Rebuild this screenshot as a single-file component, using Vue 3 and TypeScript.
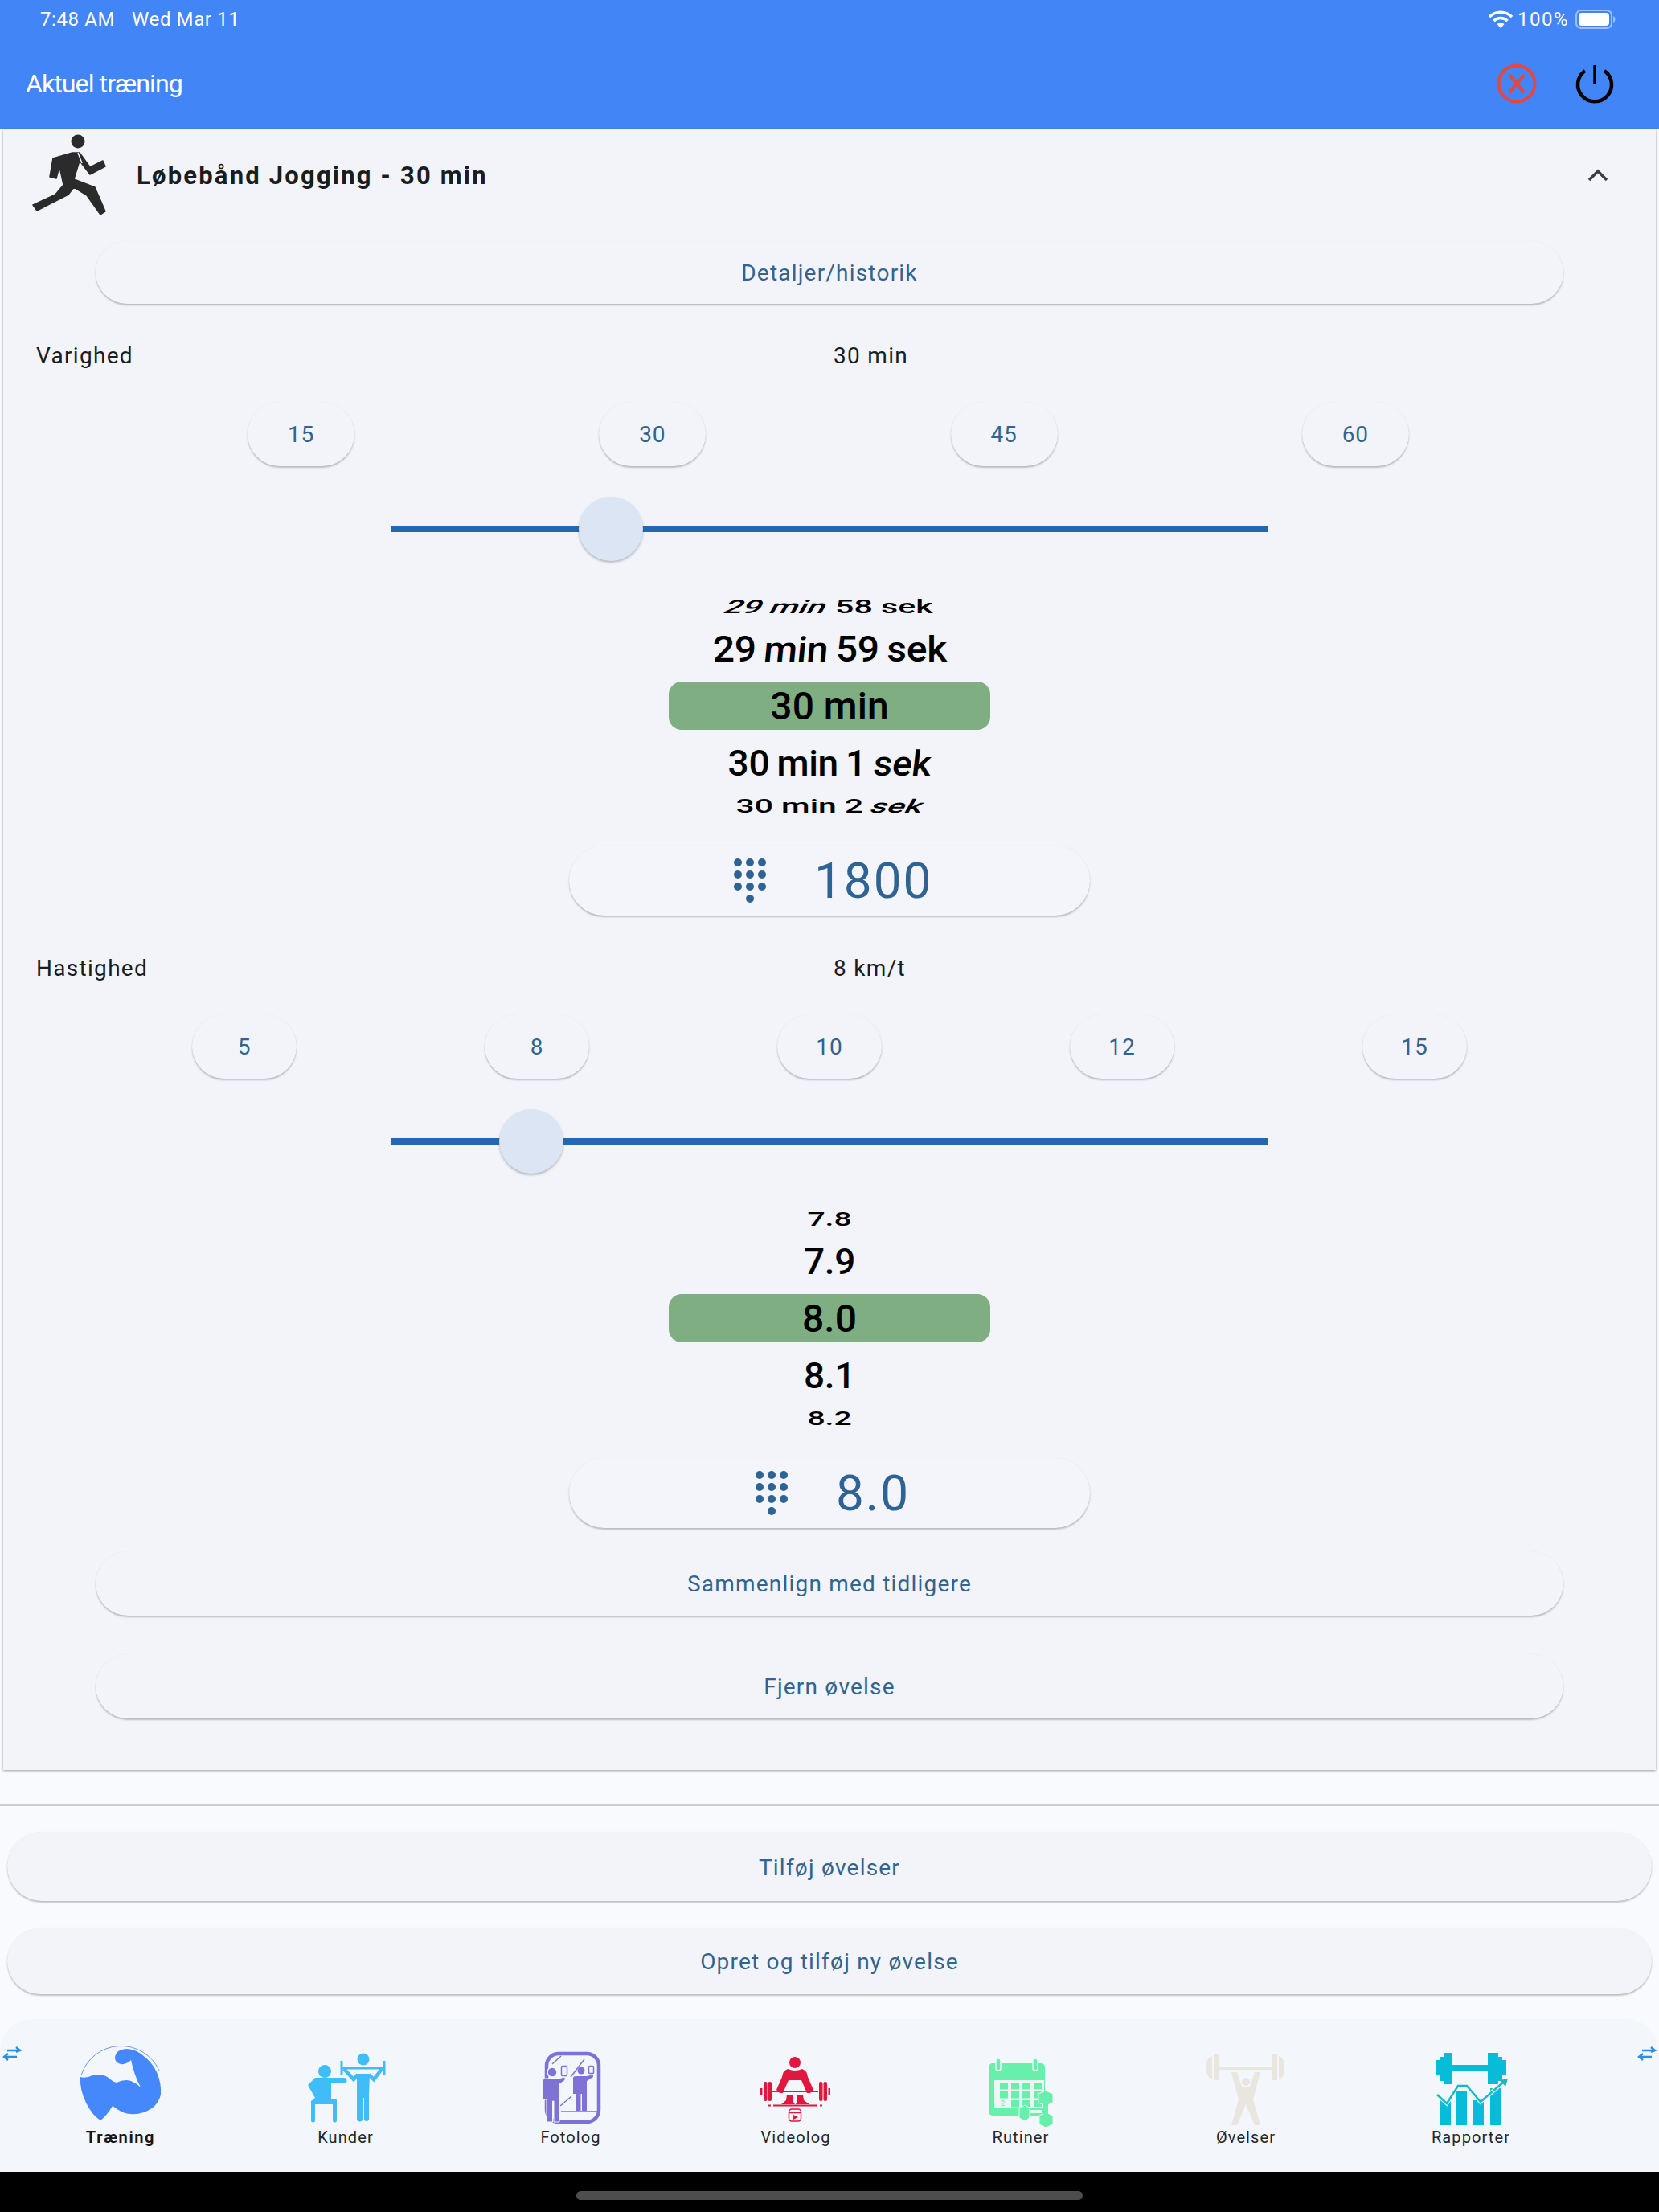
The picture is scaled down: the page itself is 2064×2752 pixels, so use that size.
<script setup lang="ts">
interface Seg { t: string; skew?: number }
interface WheelRow { kind: 'far' | 'near' | 'sel'; segs: Seg[]; sx: number; sy: number }
interface Field {
  label: string
  value: string
  chips: string[]
  chipClass: string
  thumb: number
  wheel: WheelRow[]
  dial: string
  dialClass: string
}

const fields: Field[] = [
  {
    label: 'Varighed', value: '30 min', chips: ['15', '30', '45', '60'], chipClass: 'chips-four', thumb: 25.1,
    wheel: [
      { kind: 'far', sx: 1.21, sy: 0.68, segs: [{ t: '29 min', skew: -18 }, { t: ' 58 sek' }] },
      { kind: 'near', sx: 1.045, sy: 0.95, segs: [{ t: '29 ' }, { t: 'min', skew: -5 }, { t: ' 59 sek' }] },
      { kind: 'sel', sx: 1, sy: 1, segs: [{ t: '30 min' }] },
      { kind: 'near', sx: 1, sy: 0.95, segs: [{ t: '30 min 1 ' }, { t: 'sek', skew: -6 }] },
      { kind: 'far', sx: 1.2, sy: 0.68, segs: [{ t: '30 min 2 ' }, { t: 'sek', skew: -18 }] }
    ],
    dial: '1800', dialClass: 'dial-wide'
  },
  {
    label: 'Hastighed', value: '8 km/t', chips: ['5', '8', '10', '12', '15'], chipClass: 'chips-five', thumb: 16,
    wheel: [
      { kind: 'far', sx: 1.15, sy: 0.68, segs: [{ t: '7.8' }] },
      { kind: 'near', sx: 1, sy: 0.95, segs: [{ t: '7.9' }] },
      { kind: 'sel', sx: 1, sy: 1, segs: [{ t: '8.0' }] },
      { kind: 'near', sx: 1, sy: 0.95, segs: [{ t: '8.1' }] },
      { kind: 'far', sx: 1.15, sy: 0.68, segs: [{ t: '8.2' }] }
    ],
    dial: '8.0', dialClass: 'dial-narrow'
  }
]

const dots = [
  [0, 0], [15, 0], [30, 0],
  [0, 15], [15, 15], [30, 15],
  [0, 30], [15, 30], [30, 30],
  [15, 45]
]

const cells: number[][] = []
for (const y of [39, 50, 61]) {
  for (const x of [20, 34, 48, 62]) {
    if (!(y === 61 && x === 20)) cells.push([x, y])
  }
}
</script>

<template>
  <div class="screen">
    <header class="appbar">
      <div class="status">
        <span class="status-left"><span>7:48 AM</span><span>Wed Mar 11</span></span>
        <span class="status-right">
          <svg class="wifi" viewBox="0 0 30 24" width="30" height="24">
            <path d="M1 9 A20 20 0 0 1 29 9" fill="none" stroke="#fff" stroke-width="3.4" />
            <path d="M6.5 14 A12 12 0 0 1 23.500 14" fill="none" stroke="#fff" stroke-width="3.4" />
            <path d="M15 23 L10.500 18 A6.500 6.500 0 0 1 19.500 18 Z" fill="#fff" />
          </svg>
          <span class="pct">100%</span>
          <svg class="battery" viewBox="0 0 50 24" width="50" height="24">
            <rect x="1" y="1" width="44" height="22" rx="6" fill="none" stroke="#9cc0fb" stroke-width="2" />
            <rect x="4" y="4" width="38" height="16" rx="4" fill="#fff" />
            <path d="M47 8 Q49.500 9 49.500 12 Q49.500 15 47 16 Z" fill="#9cc0fb" />
          </svg>
        </span>
      </div>
      <div class="toolbar">
        <span class="title">Aktuel træning</span>
        <span class="actions">
          <svg viewBox="0 0 52 52" width="52" height="52">
            <circle cx="26" cy="26" r="22.500" fill="none" stroke="#e8453c" stroke-width="4" />
            <path d="M17 15 L35 37 M35 15 L17 37" stroke="#e8453c" stroke-width="4" fill="none" />
          </svg>
          <svg viewBox="0 0 52 52" width="52" height="52">
            <path d="M14 10 A21 21 0 1 0 38 10" fill="none" stroke="#000" stroke-width="4.500" />
            <path d="M26 3 V26" stroke="#000" stroke-width="3.500" />
          </svg>
        </span>
      </div>
    </header>

    <section class="card">
      <div class="card-head">
        <svg class="runner" viewBox="38 165 96 106" width="96" height="106">
          <circle cx="97" cy="176" r="8.500" fill="#2b2b2b" />
          <path
            d="M90 190 L66 197 L62 220 L70 222 L74 207 L79 230 L69 242 L41 255 L46 262 L85 242 L92 233 L108 243 L125 267 L131 263 L118 233 L92 223 L99 200 L112 217 L131 207 L128 200 L112 208 L99 190 Z"
            fill="#2b2b2b" stroke="#2b2b2b" stroke-width="1.500" stroke-linejoin="round"
          />
          <path d="M97 190 L102 203" stroke="#f2f4fa" stroke-width="1.500" />
        </svg>
        <span class="card-title">Løbebånd Jogging - 30 min</span>
        <svg class="chevron" viewBox="0 0 28 18" width="28" height="18">
          <path d="M3 15 L14 4 L25 15" fill="none" stroke="#3a3d42" stroke-width="3.500" />
        </svg>
      </div>

      <button class="btn btn-inner btn-first">Detaljer/historik</button>

      <div v-for="(f, fi) in fields" :key="f.label" class="field" :class="{ 'field-second': fi === 1 }">
        <div class="field-head">
          <span class="field-label">{{ f.label }}</span>
          <span class="field-value">{{ f.value }}</span>
        </div>

        <div class="chips" :class="f.chipClass">
          <button v-for="c in f.chips" :key="c" class="chip">{{ c }}</button>
        </div>

        <div class="slider">
          <div class="track"></div>
          <div class="thumb" :style="{ left: f.thumb + '%' }"></div>
        </div>

        <div class="wheel">
          <div v-for="(r, ri) in f.wheel" :key="ri" class="wheel-row" :class="'wheel-' + r.kind">
            <span class="wheel-text" :style="{ transform: `scale(${r.sx}, ${r.sy})` }">
              <span
                v-for="(s, si) in r.segs"
                :key="si"
                class="seg"
                :style="s.skew ? { transform: `skewX(${s.skew}deg)` } : undefined"
              >{{ s.t }}</span>
            </span>
          </div>
        </div>

        <div class="dial" :class="f.dialClass">
          <svg viewBox="0 0 40 56" width="40" height="56">
            <circle v-for="(d, di) in dots" :key="di" :cx="d[0] + 5" :cy="d[1] + 5" r="5" fill="#2f6393" />
          </svg>
          <span class="dial-value">{{ f.dial }}</span>
        </div>
      </div>

      <button class="btn btn-inner btn-compare">Sammenlign med tidligere</button>
      <button class="btn btn-inner btn-remove">Fjern øvelse</button>
    </section>

    <div class="divider"></div>

    <button class="btn btn-page btn-add">Tilføj øvelser</button>
    <button class="btn btn-page btn-new">Opret og tilføj ny øvelse</button>

    <nav class="nav">
      <svg class="swap swap-left" viewBox="0 0 24 20" width="24" height="20">
        <path d="M6 6 H21 M17 2 L22 6 L17 8 M18 14 H3 M7 10 L2 14 L7 18" fill="none" stroke="#2a8fe0" stroke-width="2.400" />
      </svg>
      <svg class="swap swap-right" viewBox="0 0 24 20" width="24" height="20">
        <path d="M6 6 H21 M17 2 L22 6 L17 8 M18 14 H3 M7 10 L2 14 L7 18" fill="none" stroke="#2a8fe0" stroke-width="2.400" />
      </svg>

      <div class="nav-item nav-active">
        <svg viewBox="-5 -2 120 108" width="120" height="108">
          <path d="M6 42 A52 52 0 0 1 103 36" fill="none" stroke="#4285f4" stroke-width="0.800" />
          <path d="M5 44 Q12 46 20 42 Q32 39 40 45 Q45 50 50 51 Q60 46 68 49 Q75 52 80 57 Q72 42 68 23 Q62 29 55 28 Q48 26 48 20 Q49 10 62 9 Q72 9 80 15 Q95 26 100 38 Q106 52 105 66 Q101 82 84 88 Q68 93 56 87 Q50 84 45 80 Q38 92 30 98 Q20 92 12 76 Q4 60 5 44 Z" fill="#4488fb" />
        </svg>
        <span>Træning</span>
      </div>

      <div class="nav-item">
        <svg viewBox="370 2538 120 108" width="120" height="108" fill="#40bcf9">
          <circle cx="404" cy="2577" r="8" />
          <circle cx="452" cy="2562" r="7.500" />
          <path d="M392 2585 H428 A3.500 3.500 0 0 1 428 2592 H412 V2611 H417 A2 2 0 0 1 419 2613 V2638 A2.500 2.500 0 0 1 414 2638 V2618 H392 V2638 A2.500 2.500 0 0 1 387 2638 V2614 L392 2610 L383 2594 Z" />
          <path d="M424 2573 H479" stroke="#40bcf9" stroke-width="3" />
          <path d="M425 2564 V2582 M478 2564 V2582" stroke="#40bcf9" stroke-width="3" />
          <path d="M428 2574 L440 2587 L445 2581 M475 2574 L465 2587 L459 2581" fill="none" stroke="#40bcf9" stroke-width="4.500" />
          <path d="M444 2580 H460 L459 2608 V2636 A3 3 0 0 1 453 2636 V2610 H451 V2636 A3 3 0 0 1 444 2636 Z" />
        </svg>
        <span>Kunder</span>
      </div>

      <div class="nav-item">
        <svg viewBox="-15 -10 120 108" width="120" height="108" fill="#7f72d6">
          <rect x="15" y="7" width="65" height="85" rx="15" fill="none" stroke="#7f72d6" stroke-width="4.500" />
          <path d="M45 36 L62 14 M32 72 L46 60 M22 20 L33 10 M33 79 H78" stroke="#7f72d6" stroke-width="1.500" fill="none" />
          <circle cx="22" cy="30" r="6" stroke="#f3f6fa" stroke-width="1.500" />
          <path d="M10 41 Q10 38 14 38 H29 L38 36 V40 L31 45 V92 H24 V66 H22.500 V92 H15 V64 H10 Z" stroke="#f3f6fa" stroke-width="1" />
          <rect x="33.500" y="22.500" width="7" height="12" rx="1" fill="none" stroke="#7f72d6" stroke-width="1.500" />
          <circle cx="58" cy="28" r="4.500" />
          <path d="M48 38 Q48 35 51 35 H65 L73 33 V36 L65 41 V78 H59 V57 H57.500 V78 H52 V57 H48 Z" />
          <rect x="67.500" y="22.500" width="6" height="9" rx="1" fill="none" stroke="#7f72d6" stroke-width="1.500" />
        </svg>
        <span>Fotolog</span>
      </div>

      <div class="nav-item">
        <svg viewBox="-12 -14 120 108" width="120" height="108" fill="#e0173f">
          <circle cx="47" cy="14" r="7" />
          <path d="M38 22 Q47 26 56 22 Q62 24 63 32 L70 48 L66 52 H62 L55 36 H39 L32 52 H28 L24 48 L31 32 Q32 24 38 22 Z" />
          <path d="M37 54 H44 V62 L47 66 H30 L36 61 Z M50 54 H57 L58 61 L65 66 H48 L50 62 Z" />
          <path d="M19 50 H76" stroke="#e0173f" stroke-width="2" />
          <rect x="4" y="46" width="2.500" height="8" />
          <rect x="8" y="38" width="4.500" height="24" rx="2" />
          <rect x="13.500" y="38" width="4.500" height="24" rx="2" />
          <rect x="77" y="38" width="4.500" height="24" rx="2" />
          <rect x="82.500" y="38" width="4.500" height="24" rx="2" />
          <rect x="88.500" y="46" width="2.500" height="8" />
          <path d="M20 67.500 H75" stroke="#e0173f" stroke-width="1.800" />
          <path d="M14 67.500 H17 M78 67.500 H81" stroke="#e0173f" stroke-width="1.800" />
          <rect x="39.500" y="72" width="15" height="15" rx="3.500" fill="none" stroke="#e0173f" stroke-width="1.500" />
          <path d="M40 76.500 H54" stroke="#e0173f" stroke-width="1.500" />
          <path d="M45 79 L51 82 L45 85 Z" />
        </svg>
        <span>Videolog</span>
      </div>

      <div class="nav-item">
        <svg viewBox="-14 -14 120 108" width="120" height="108" fill="#66f0ac">
          <rect x="6" y="15" width="70" height="65" rx="5" />
          <rect x="13" y="36" width="62" height="34" fill="#e8f8f2" />
          <rect v-for="(c, i) in cells" :key="i" :x="c[0]" :y="c[1]" width="10" height="8.500" />
          <text x="21" y="68" font-size="9" fill="#8fcfb8" font-family="Roboto, sans-serif">2</text>
          <rect x="15" y="9" width="6" height="15" rx="3" fill="#66f0ac" stroke="#eef6f5" stroke-width="1.500" />
          <rect x="61" y="9" width="6" height="15" rx="3" fill="#66f0ac" stroke="#eef6f5" stroke-width="1.500" />
          <path d="M50 73 H72" stroke="#e8f8f2" stroke-width="8" />
          <path d="M52 72 H72" stroke="#66f0ac" stroke-width="2" />
          <path d="M44 70 L52 67 L57 71 V82 L52 87 L44 83 Z" stroke="#eef6f5" stroke-width="1" />
          <path d="M68 53 L77 49 L86 53 V64 L77 68 L68 64 Z" stroke="#eef6f5" stroke-width="1" />
          <path d="M69 80 L77 76 L86 80 V91 L77 95 L69 91 Z" stroke="#eef6f5" stroke-width="1" />
          <rect x="74" y="64" width="6" height="14" />
        </svg>
        <span>Rutiner</span>
      </div>

      <div class="nav-item">
        <svg viewBox="1490 2538 120 108" width="120" height="108" fill="#e9e6e0">
          <path d="M1517 2573 H1584" stroke="#e9e6e0" stroke-width="4" />
          <path d="M1508 2558 V2587 Q1501 2585 1501 2572 Q1501 2560 1508 2558 Z M1510 2556 H1516 V2588 H1510 Z" />
          <path d="M1591 2558 V2587 Q1598 2585 1598 2572 Q1598 2560 1591 2558 Z M1583 2556 H1589 V2588 H1583 Z" />
          <circle cx="1550" cy="2590" r="5" />
          <path d="M1532 2578 H1539 L1545 2596 H1555 L1561 2578 H1568 L1559 2612 L1568 2644 H1561 L1550 2618 L1539 2644 H1532 L1541 2612 Z" />
        </svg>
        <span>Øvelser</span>
      </div>

      <div class="nav-item">
        <svg viewBox="1769 2538 120 108" width="120" height="108" fill="#06bcd8">
          <path d="M1804 2569 H1852 V2577 H1804 Z" />
          <path d="M1785 2563 H1790 V2559 H1795 V2554 H1806 V2593 H1795 V2589 H1790 V2581 H1785 Z" />
          <path d="M1873 2563 H1868 V2559 H1863 V2554 H1850 V2593 H1863 V2589 H1868 V2581 H1873 Z" />
          <rect x="1790" y="2613" width="14" height="31" />
          <rect x="1811" y="2602" width="13" height="42" />
          <rect x="1832" y="2613" width="13" height="31" />
          <rect x="1853" y="2598" width="13" height="46" />
          <path d="M1787 2606 L1799 2617 L1813 2595 H1824 L1841 2615 L1871 2589" fill="none" stroke="#f3f6fa" stroke-width="5" />
          <path d="M1787 2606 L1799 2617 L1813 2595 H1824 L1841 2615 L1871 2589" fill="none" stroke="#12b9c6" stroke-width="2.500" />
          <path d="M1865 2588 L1875 2586 L1872 2596 Z" fill="#14bdb0" />
        </svg>
        <span>Rapporter</span>
      </div>
    </nav>

    <footer class="home">
      <div class="home-bar"></div>
    </footer>
  </div>
</template>

<style>
html, body { margin: 0; background: #000; }
</style>

<style scoped>
.screen {
  width: 2064px;
  height: 2752px;
  overflow: hidden;
  background: #f9fafe;
  font-family: Roboto, "Noto Sans", sans-serif;
  display: flex;
  flex-direction: column;
  color: #1a1c1e;
}
.appbar { height: 160px; background: #4285f7; color: #fff; flex: none; display: flex; flex-direction: column; }
.status { height: 48px; padding: 0 54px 0 50px; display: flex; justify-content: space-between; align-items: center; font-size: 24px; letter-spacing: 0.600px; }
.status-left { display: flex; gap: 21px; }
.status-right { display: flex; align-items: center; gap: 5px; }
.pct { letter-spacing: 1.500px; }
.wifi { margin-right: 1px; }
.status-right .battery { margin-left: 3px; }
.toolbar { flex: 1; display: flex; align-items: center; justify-content: space-between; padding: 0 54px 0 32px; }
.title { font-size: 32px; letter-spacing: -0.900px; }
.actions { display: flex; gap: 45px; align-items: center; }

.card {
  margin: 0 4px;
  height: 2042px;
  box-sizing: border-box;
  flex: none;
  background: #f2f4fa;
  box-shadow: 0 1.500px 3px rgba(70, 75, 90, 0.4), 0 0 1.500px rgba(70, 75, 90, 0.25);
  display: flex;
  flex-direction: column;
}
.card-head { height: 116px; display: flex; align-items: center; padding: 0 58px 0 34px; flex: none; }
.runner { flex: none; }
.card-title { margin-left: 36px; font-size: 31px; font-weight: 700; letter-spacing: 2.200px; flex: 1; }
.chevron { flex: none; }

.btn {
  display: block;
  border: 0;
  background: #f2f4fa;
  font-family: inherit;
  font-size: 28px;
  letter-spacing: 1.200px;
  color: #33638f;
  box-shadow: 0 2px 2px rgba(70, 75, 90, 0.32), 0 0 1px rgba(70, 75, 90, 0.1);
  padding: 0;
  flex: none;
}
.btn-inner { margin-left: 115px; margin-right: 115px; height: 78px; border-radius: 40px; }
.btn-first { margin-top: 24px; }
.btn-compare { margin-top: 29px; height: 80px; }
.btn-remove { margin-top: 48px; height: 80px; }

.field { display: flex; flex-direction: column; flex: none; }
.field-head { margin-top: 44px; height: 40px; display: flex; align-items: center; font-size: 28px; letter-spacing: 1.300px; }
.field-second .field-head { margin-top: 45px; }
.field-label { margin-left: 41px; width: 992px; }
.chips { margin-top: 38px; height: 80px; display: flex; justify-content: space-around; }
.chips-four { padding: 0 155px 0 152px; }
.chips-five { padding: 0 118px; }
.chip {
  border: 0;
  background: #f2f4fa;
  border-radius: 40px;
  min-width: 130px;
  height: 80px;
  padding: 0;
  font-family: inherit;
  font-size: 28px;
  letter-spacing: 0.900px;
  color: #33638f;
  box-shadow: 0 2px 2px rgba(70, 75, 90, 0.32), 0 0 1px rgba(70, 75, 90, 0.1);
}
.chips-four .chip { min-width: 133px; }
.slider { margin: 38px 482px 0; height: 80px; position: relative; display: flex; align-items: center; }
.track { height: 8px; width: 100%; background: #2268b0; }
.thumb {
  position: absolute;
  top: 0;
  width: 80px;
  height: 80px;
  margin-left: -40px;
  border-radius: 50%;
  background: #dbe5f4;
  box-shadow: 0 2px 3px rgba(70, 75, 90, 0.35);
}

.wheel { margin-top: 37px; display: flex; flex-direction: column; align-items: center; color: #000; }
.wheel-row { display: flex; align-items: center; justify-content: center; white-space: pre; }
.wheel-text { display: inline-block; }
.seg { display: inline-block; white-space: pre; }
.wheel-far { height: 40px; font-size: 34px; font-weight: 500; }
.wheel-near { height: 66px; font-size: 46px; font-weight: 500; word-spacing: -2px; letter-spacing: -0.300px; }
.wheel-sel { width: 400px; height: 60px; background: #7fae82; border-radius: 16px; font-size: 48px; font-weight: 500; margin: 7px 0 9px; }

.dial {
  margin: 29px auto 0;
  width: 648px;
  height: 87px;
  box-sizing: border-box;
  border-radius: 44px;
  background: #f3f5fa;
  box-shadow: 0 2px 2px rgba(70, 75, 90, 0.32), 0 0 1px rgba(70, 75, 90, 0.1);
  display: flex;
  align-items: center;
  color: #2f6393;
}
.dial-wide { padding-left: 205px; }
.dial-narrow { padding-left: 232px; }
.dial svg { flex: none; }
.dial-value { margin-left: 60px; font-size: 62px; letter-spacing: 2px; }

.divider { margin-top: 43px; height: 2px; background: #c9cdd5; flex: none; }
.btn-page { margin: 0 9px; flex: none; border-radius: 44px; }
.btn-add { margin-top: 32px; height: 86px; padding-top: 2px; }
.btn-new { margin-top: 34px; height: 82px; }

.nav {
  margin-top: 31px;
  height: 190px;
  flex: none;
  box-sizing: border-box;
  padding: 26px 0 0 10px;
  display: flex;
  background: #f3f6fa;
  border-radius: 40px 40px 0 0;
  position: relative;
}
.nav-item { width: 280px; flex: none; display: flex; flex-direction: column; align-items: center; font-size: 20px; letter-spacing: 1.100px; color: #24272a; }
.nav-item span { line-height: 26px; }
.nav-active { font-weight: 700; letter-spacing: 1.600px; color: #16181a; }
.swap { position: absolute; top: 33px; }
.swap-left { left: 3px; }
.swap-right { right: 3px; }

.home { flex: 1; background: #000; display: flex; justify-content: center; padding-top: 24px; box-sizing: border-box; }
.home-bar { width: 630px; height: 11px; border-radius: 6px; background: #4d4d4d; }
</style>
